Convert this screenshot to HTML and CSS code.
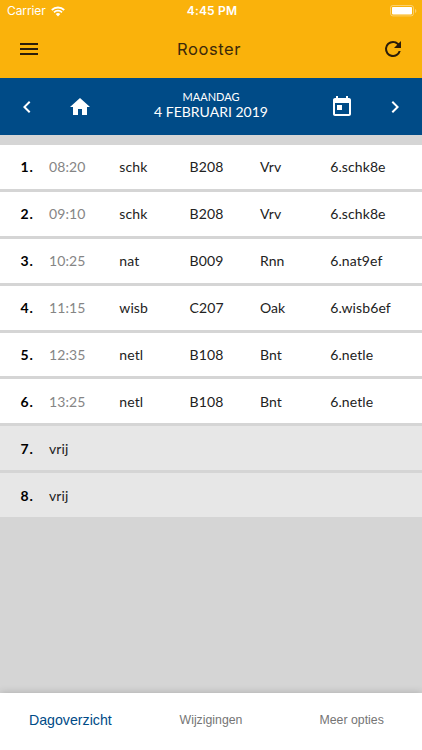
FILE: index.html
```html
<!doctype html>
<html lang="nl">
<head>
    <meta charset="UTF-8">
    <meta name="viewport" content="width=device-width, initial-scale=1.0">
    <title>Rooster</title>
    <link rel="stylesheet" href="styles.css">
</head>
<body>
<div id="app">
    <div class="header">
        <div class="status">
            <div class="carrier">
                <span>Carrier</span>
                <svg class="wifi" width="14" height="11" viewBox="0 0 14 11">
                    <path d="M.8 4a8.9 8.9 0 0 1 12.4 0M3 6.3a5.7 5.7 0 0 1 8 0" fill="none" stroke="#fff" stroke-width="1.8"/>
                    <path d="M7 10.5L4.7 8.1a3.3 3.3 0 0 1 4.6 0z" fill="#fff"/>
                </svg>
            </div>
            <div class="clock">4:45 PM</div>
            <svg class="battery" width="27" height="12" viewBox="0 0 27 12">
                <rect x=".5" y=".5" width="23" height="10.4" rx="2.4" fill="none" stroke="#fff" stroke-opacity=".4"/>
                <rect x="2" y="2" width="20" height="7.4" rx=".8" fill="#fff"/>
                <path d="M25 4v4q1.4-.6 1.4-2T25 4z" fill="#fff" fill-opacity=".4"/>
            </svg>
        </div>
        <div class="toolbar">
            <svg width="24" height="24" viewBox="0 0 24 24"><path d="M3 18h18v-2H3v2zm0-5h18v-2H3v2zm0-7v2h18V6H3z"/></svg>
            <h1>Rooster</h1>
            <svg width="24" height="24" viewBox="0 0 24 24"><path d="M17.65 6.35A7.96 7.96 0 0 0 12 4a8 8 0 1 0 7.73 10h-2.08A6 6 0 1 1 12 6c1.66 0 3.14.69 4.22 1.78L13 11h7V4z"/></svg>
        </div>
    </div>

    <div class="datebar">
        <svg width="24" height="24" viewBox="0 0 24 24"><path d="M15.41 7.41L14 6l-6 6 6 6 1.41-1.41L10.83 12z"/></svg>
        <svg class="home" width="24" height="24" viewBox="0 0 24 24"><path d="M10 20v-6h4v6h5v-8h3L12 3 2 12h3v8z"/></svg>
        <div class="date">
            <div class="day">MAANDAG</div>
            <div class="full">4 FEBRUARI 2019</div>
        </div>
        <svg class="today" width="24" height="24" viewBox="0 0 24 24"><path d="M19 3h-1V1h-2v2H8V1H6v2H5c-1.11 0-1.99.9-1.99 2L3 19c0 1.1.89 2 2 2h14c1.1 0 2-.9 2-2V5c0-1.1-.9-2-2-2zm0 16H5V8h14v11zM7 10h5v5H7z"/></svg>
        <svg width="24" height="24" viewBox="0 0 24 24"><path d="M10 6L8.59 7.41 13.17 12l-4.58 4.59L10 18l6-6z"/></svg>
    </div>

    <ul class="lessons">
        <li><strong>1.</strong><span class="time">08:20</span><span>schk</span><span>B208</span><span>Vrv</span><span>6.schk8e</span></li>
        <li><strong>2.</strong><span class="time">09:10</span><span>schk</span><span>B208</span><span>Vrv</span><span>6.schk8e</span></li>
        <li><strong>3.</strong><span class="time">10:25</span><span>nat</span><span>B009</span><span>Rnn</span><span>6.nat9ef</span></li>
        <li><strong>4.</strong><span class="time">11:15</span><span>wisb</span><span>C207</span><span>Oak</span><span>6.wisb6ef</span></li>
        <li><strong>5.</strong><span class="time">12:35</span><span>netl</span><span>B108</span><span>Bnt</span><span>6.netle</span></li>
        <li><strong>6.</strong><span class="time">13:25</span><span>netl</span><span>B108</span><span>Bnt</span><span>6.netle</span></li>
        <li class="free"><strong>7.</strong><span>vrij</span></li>
        <li class="free"><strong>8.</strong><span>vrij</span></li>
    </ul>

    <div class="tabs">
        <div class="active">Dagoverzicht</div>
        <div>Wijzigingen</div>
        <div>Meer opties</div>
    </div>
</div>
</body>
</html>
```
FILE: styles.css
```css
body{
    margin:0;
    font-family: Lato, "Liberation Sans", sans-serif;
}
svg{
    display: block;
    flex:none;
}

#app{
    display: flex;
    flex-direction: column;
    height:750px;
    background-color: #d5d5d5;
    overflow: hidden;
}

.header{
    height:78px;
    background-color: #fab20b;
}
.status{
    display: grid;
    grid-template-columns: 1fr auto 1fr;
    align-items: center;
    height:22px;
    padding:0 5px 0 7px;
    color:#fff;
    font:12px/22px Inter, sans-serif;
}
.carrier{
    display: flex;
    align-items: center;
    gap:5px;
    letter-spacing: -.1px;
}
.clock{
    font-weight: 600;
    letter-spacing: .2px;
}
.battery{
    justify-self: end;
}
.toolbar{
    display: flex;
    align-items: center;
    justify-content: space-between;
    height:54px;
    padding:0 17px;
    fill:#2b1d0a;
}
.toolbar h1{
    margin:0;
    padding-right:4px;
    font:400 16.5px/24px Inter, sans-serif;
    letter-spacing: .6px;
    color:#3c290a;
}

.datebar{
    display: flex;
    align-items: center;
    height:57px;
    padding:0 15px;
    background-color: #004b87;
    color:#fff;
    fill:#fff;
}
.home{
    margin-left:29px;
}
.today{
    margin-right:29px;
}
.date{
    flex:1;
    padding-bottom:3px;
    text-align: center;
}
.day{
    font-size: 11px;
    line-height:14px;
}
.full{
    font-size: 14px;
    line-height:16px;
}

.lessons{
    flex:1;
    margin:0;
    padding:10px 0 0;
    list-style: none;
}
.lessons li{
    display: grid;
    grid-template-columns: 28.5px repeat(4, 70.3px) 1fr;
    align-items: center;
    height:43.9px;
    margin-bottom:3px;
    padding-left:20.5px;
    background-color: #fff;
    color:#222;
    font-size: 14px;
    letter-spacing: .1px;
}
.lessons strong{
    color:#000;
    letter-spacing: .8px;
}
.lessons .time{
    color:#858585;
}
.lessons .free{
    background-color: #e7e7e7;
}

.tabs{
    display: grid;
    grid-template-columns: repeat(3, 1fr);
    height:57px;
    background-color: #fff;
    box-shadow: 0 0 8px rgba(0,0,0,.2);
    color:#757575;
    font:12.3px/54px "Liberation Sans", sans-serif;
    text-align: center;
}
.tabs .active{
    color:#004b87;
    font-size: 14.2px;
}
```
